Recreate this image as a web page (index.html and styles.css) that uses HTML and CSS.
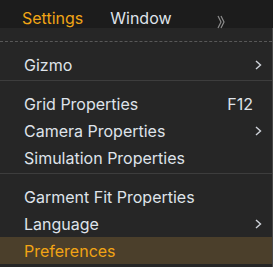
FILE: index.html
```html
<!DOCTYPE html>
<html lang="en">
<head>
  <meta charset="UTF-8">
  <meta name="viewport" content="width=device-width, initial-scale=1.0">
  <title>Settings Menu</title>
  <link rel="stylesheet" href="styles.css">
</head>
<body>
  <div class="menubar">
    <span class="menubar-item active">Settings</span>
    <span class="menubar-item">Window</span>
    <svg class="menubar-more" width="8" height="14" viewBox="0 0 8 14">
      <polyline points="1,1 4,7 1,13" />
      <polyline points="4,1 7,7 4,13" />
    </svg>
  </div>

  <div class="dropdown">
    <div class="tearoff"></div>

    <div class="menu-item">
      <span>Gizmo</span>
      <svg class="arrow" width="7" height="10" viewBox="0 0 7 10"><polyline points="1,1 5.5,5 1,9" /></svg>
    </div>
    <div class="separator"></div>

    <div class="menu-item">
      <span>Grid Properties</span>
      <span class="shortcut">F12</span>
    </div>
    <div class="menu-item">
      <span>Camera Properties</span>
      <svg class="arrow" width="7" height="10" viewBox="0 0 7 10"><polyline points="1,1 5.5,5 1,9" /></svg>
    </div>
    <div class="menu-item">
      <span>Simulation Properties</span>
    </div>
    <div class="separator"></div>

    <div class="menu-item">
      <span>Garment Fit Properties</span>
    </div>
    <div class="menu-item">
      <span>Language</span>
      <svg class="arrow" width="7" height="10" viewBox="0 0 7 10"><polyline points="1,1 5.5,5 1,9" /></svg>
    </div>
    <div class="menu-item selected">
      <span>Preferences</span>
    </div>
  </div>
</body>
</html>
```

FILE: styles.css
```css
* {
  box-sizing: border-box;
}

body {
  margin: 0;
  background: #262626;
  font-family: Inter, 'Noto Sans', sans-serif;
  font-size: 16px;
  color: #dfe3ea;
  width: 273px;
  height: 267px;
  overflow: hidden;
}

.menubar {
  height: 28px;
  display: flex;
  align-items: flex-start;
  padding: 8px 0 0 22px;
  background: #1c1c1c;
}

.menubar-item {
  margin-right: 27px;
}

.menubar-item.active {
  color: #f0a516;
}

.menubar-more {
  margin: 7px 0 0 18px;
  fill: none;
  stroke: #8c8c8c;
  stroke-width: 1.2;
}

.dropdown {
  background: #262626;
  border-right: 1px solid #474747;
  height: 239px;
}

.tearoff {
  height: 23px;
  padding-top: 13px;
}

.tearoff::after {
  content: "";
  display: block;
  border-top: 1px dashed #585858;
}

.menu-item {
  height: 27px;
  display: flex;
  align-items: center;
  justify-content: space-between;
  padding: 0 10px 0 24px;
}

.arrow {
  fill: none;
  stroke: #cfd3da;
  stroke-width: 1.4;
}

.shortcut {
  padding-right: 9px;
}

.separator {
  margin: 2px 0 9px;
  border-top: 1px solid #3d3d3d;
}

.menu-item.selected {
  background: #4b3f2b;
  color: #f2a414;
}
```
